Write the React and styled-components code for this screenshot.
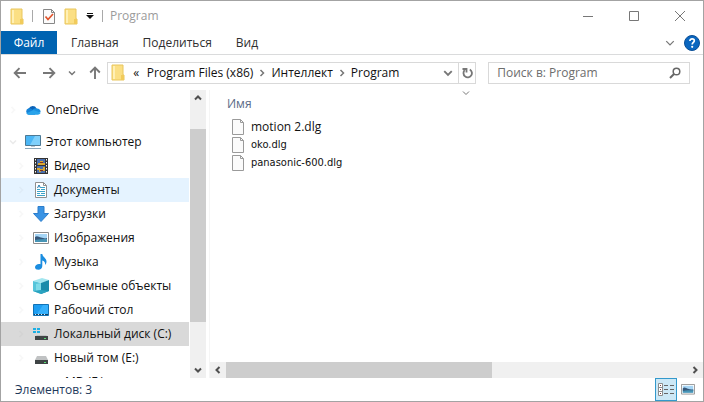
import { useState } from "react";
import styled, { createGlobalStyle, css } from "styled-components";

const GlobalStyle = createGlobalStyle`
  * {
    box-sizing: border-box;
  }

  body {
    margin: 0;
    background: #ffffff;
    color: #111111;
    font-family: "Open Sans", "Noto Sans", sans-serif;
    font-size: 12px;
    line-height: 16px;
  }

  button,
  input {
    font: inherit;
    color: inherit;
  }

  svg {
    display: block;
    flex: none;
  }
`;

const plainButton = css`
  display: flex;
  align-items: center;
  justify-content: center;
  flex: none;
  padding: 0;
  border: 0;
  background: transparent;
`;

const Window = styled.div`
  display: flex;
  flex-direction: column;
  height: 100vh;
  border: 1px solid #a3a3a3;
  background: #ffffff;
`;

/* Title bar */

const TitleBar = styled.header`
  display: flex;
  align-items: center;
  flex: none;
  height: 30px;
  padding-left: 8px;
`;

const QuickAccess = styled.div`
  display: flex;
  align-items: center;
  gap: 4px;
`;

const ToolButton = styled.button`
  ${plainButton}
  width: ${({ $width }) => $width}px;
  height: 20px;
`;

const Separator = styled.span`
  width: 1px;
  height: 12px;
  margin: 0 ${({ $gap }) => $gap}px;
  background: #a9a9a9;
`;

const Title = styled.h1`
  flex: 1;
  margin: 0;
  padding-left: 5px;
  color: #9b9b9b;
  font-size: 12px;
  font-weight: 400;
`;

const CaptionButton = styled.button`
  ${plainButton}
  width: 46px;
  height: 28px;
`;

/* Ribbon */

const Ribbon = styled.nav`
  display: flex;
  flex: none;
  height: 24px;
  border-bottom: 1px solid #dadbdc;
`;

const Tab = styled.button`
  ${plainButton}
  padding: 0 12px;
  color: #2f2f2f;

  ${({ $primary }) =>
    $primary &&
    css`
      width: 56px;
      margin-right: 2px;
      padding: 0;
      background: #0063b1;
      color: #ffffff;
    `}
`;

const RibbonTools = styled.div`
  display: flex;
  align-items: center;
  gap: 9px;
  margin-left: auto;
  padding-right: 3px;
`;

const RibbonButton = styled.button`
  ${plainButton}
`;

/* Address row */

const AddressRow = styled.div`
  display: flex;
  align-items: center;
  flex: none;
  height: 35px;
  padding: 0 13px 0 9px;
`;

const History = styled.div`
  display: flex;
  align-items: center;
  gap: 9px;
  width: 97px;
`;

const HistoryButton = styled.button`
  ${plainButton}
  width: ${({ $narrow }) => ($narrow ? 8 : 20)}px;
  height: 20px;
`;

const AddressBar = styled.div`
  display: flex;
  align-items: center;
  flex: 370 1 370px;
  height: 22px;
  border: 1px solid #d9d9d9;
  padding-left: 3px;
`;

const Crumbs = styled.div`
  display: flex;
  align-items: center;
  flex: 1;
  gap: 5px;
  padding-left: 6px;
`;

const Crumb = styled.button`
  ${plainButton}
`;

const OverflowCrumb = styled(Crumb)`
  width: 11px;
`;

const RefreshButton = styled.button`
  ${plainButton}
  width: 17px;
  height: 20px;
  border-left: 1px solid #d9d9d9;
`;

const SearchBox = styled.label`
  display: flex;
  align-items: center;
  flex: 202 1 202px;
  height: 22px;
  margin-left: 12px;
  padding: 0 8px;
  border: 1px solid #d9d9d9;
`;

const SearchInput = styled.input`
  flex: 1;
  min-width: 0;
  padding: 0;
  border: 0;
  outline: 0;
  background: transparent;

  &::placeholder {
    color: #6d6d6d;
    opacity: 1;
  }
`;

/* Body */

const Body = styled.div`
  display: flex;
  flex: 1;
  min-height: 0;
`;

const Sidebar = styled.aside`
  display: flex;
  flex: none;
  width: 209px;
  padding-right: 3px;
  border-right: 1px solid #f5f5f5;
`;

const Tree = styled.ul`
  flex: 1;
  min-width: 0;
  margin: 0;
  padding: 8px 1px 0 0;
  overflow: hidden;
  list-style: none;
`;

const TreeItem = styled.li`
  margin-top: ${({ $spaced }) => ($spaced ? 8 : 0)}px;
`;

const TreeButton = styled.button`
  ${plainButton}
  justify-content: flex-start;
  gap: 5px;
  width: 100%;
  height: 24px;
  padding-left: ${({ $level }) => 8 + $level * 8}px;
  white-space: nowrap;
  background: ${({ $state }) =>
    ({ hover: "#e5f3ff", selected: "#d9d9d9" })[$state] || "transparent"};

  &:hover {
    background: ${({ $state }) => ($state === "selected" ? "#d9d9d9" : "#e5f3ff")};
  }
`;

const Expander = styled.span`
  width: 11px;
  opacity: ${({ $open }) => ($open ? 0.15 : 0.05)};
`;

const ScrollTrack = styled.div`
  display: flex;
  flex: none;
  flex-direction: ${({ $horizontal }) => ($horizontal ? "row" : "column")};
  ${({ $horizontal }) => ($horizontal ? "height" : "width")}: 16px;
  background: #f0f0f0;
`;

const ScrollButton = styled.button`
  ${plainButton}
  width: 16px;
  height: 16px;
`;

const ScrollSpace = styled.div`
  flex: ${({ $share }) => $share} 1 0;
  background: ${({ $thumb }) => ($thumb ? "#cdcdcd" : "transparent")};
`;

const Content = styled.main`
  display: flex;
  flex: 1;
  flex-direction: column;
  min-width: 0;
`;

const SortMark = styled.div`
  display: flex;
  align-items: center;
  justify-content: center;
  height: 5px;
  padding-left: 18px;
`;

const FileArea = styled.div`
  flex: 1;
  min-height: 0;
  overflow: hidden;
`;

const FileTable = styled.table`
  width: 100%;
  border-collapse: collapse;

  th {
    height: 23px;
    padding: 0 0 5px 17px;
    color: #5a6a86;
    font-weight: 400;
    text-align: left;
  }

  td {
    height: 18px;
    padding: 0 0 0 22px;
  }
`;

const FileName = styled.div`
  display: flex;
  align-items: center;
  gap: 6px;

  ${({ $compact }) =>
    $compact &&
    css`
      font-family: "DejaVu Sans Condensed", "Open Sans", sans-serif;
      font-size: 11px;
    `}
`;

/* Status bar */

const StatusBar = styled.footer`
  display: flex;
  align-items: center;
  flex: none;
  height: 23px;
  padding: 0 4px 0 14px;
  color: #1e395b;
`;

const StatusText = styled.span`
  flex: 1;
`;

const ViewButton = styled.button`
  ${plainButton}
  width: 22px;
  height: 23px;
  border: 1px solid ${({ $active }) => ($active ? "#3399cc" : "transparent")};
  background: ${({ $active }) => ($active ? "#cce8f6" : "transparent")};
`;

/* Icons */

const Chevron = ({ dir = "down", size = 8, color = "#777777", weight = 1.5 }) => {
  const paths = {
    down: "M1 2.5 4 5.5 7 2.5",
    up: "M1 5.5 4 2.5 7 5.5",
    right: "M2.5 1 5.5 4 2.5 7",
    left: "M5.5 1 2.5 4 5.5 7",
  };
  return (
    <svg width={size} height={size} viewBox="0 0 8 8" fill="none" stroke={color} strokeWidth={weight}>
      <path d={paths[dir]} />
    </svg>
  );
};

const FolderIcon = () => (
  <svg width="14" height="17" viewBox="0 0 14 17">
    <path d="M1 1h11v10h1v5H1z" fill="#fbdf84" stroke="#e9c65c" />
    <path d="M2 2h2v13H2z" fill="#fff0b5" />
    <path d="M10 11h3v5h-3z" fill="#f1cb5b" />
  </svg>
);

const PropertiesIcon = () => (
  <svg width="14" height="17" viewBox="0 0 14 17" fill="none">
    <path d="M1.500 1.500h8l3 3v11h-11z" fill="#fbfbfb" stroke="#878787" />
    <path d="M9.500 1.500v3h3" stroke="#878787" />
    <path d="m3.500 8.500 2.500 3 5-5.500" stroke="#e0532b" strokeWidth="1.700" />
  </svg>
);

const CustomizeIcon = () => (
  <svg width="8" height="8" viewBox="0 0 8 8">
    <path d="M1 1h6v1H1zM0 3h8L4 7z" fill="#111111" />
  </svg>
);

const ArrowIcon = ({ turn = 0 }) => (
  <svg width="14" height="14" viewBox="0 0 14 14" fill="none" stroke="#777777" strokeWidth="1.900">
    <path d="M13 7H2M6.500 2.200 1.700 7l4.800 4.800" transform={`rotate(${turn} 7 7)`} />
  </svg>
);

const RefreshIcon = () => (
  <svg width="11" height="12" viewBox="0 0 11 12" fill="none" stroke="#777777" strokeWidth="1.800">
    <path d="M7.800 2.500A4.200 4.200 0 1 1 2.700 3.200" />
    <path d="M4.500 5.500V2H.5" />
  </svg>
);

const SearchIcon = () => (
  <svg width="12" height="12" viewBox="0 0 12 12" fill="none" stroke="#666666">
    <circle cx="7.500" cy="4.500" r="3.300" strokeWidth="1.500" />
    <path d="M5 7 1 11" strokeWidth="2" />
  </svg>
);

const HelpIcon = () => (
  <svg width="16" height="16" viewBox="0 0 16 16" fill="none">
    <circle cx="8" cy="8" r="7.500" fill="#0a66bf" stroke="#0b4f96" />
    <path d="M5.900 6c0-3 4.400-2.700 4.400-.2C10.300 7.500 8.200 7.400 8.200 9.500" stroke="#ffffff" strokeWidth="1.700" />
    <circle cx="8.200" cy="11.800" r="1.100" fill="#ffffff" />
  </svg>
);

const MinimizeIcon = () => (
  <svg width="10" height="10" viewBox="0 0 10 10">
    <path d="M0 5h10v1H0z" fill="#777777" />
  </svg>
);

const MaximizeIcon = () => (
  <svg width="10" height="10" viewBox="0 0 10 10" fill="none" stroke="#777777">
    <path d="M.5.5h9v9h-9z" />
  </svg>
);

const CloseIcon = () => (
  <svg width="10" height="10" viewBox="0 0 10 10" fill="none" stroke="#777777">
    <path d="m0 0 10 10M10 0 0 10" />
  </svg>
);

const OneDriveIcon = () => (
  <svg width="16" height="16" viewBox="0 0 17 16">
    <path d="M4 6.500a4.600 4.600 0 0 1 8.300-.2L11 9 4 8z" fill="#0a62b8" />
    <path d="M3.800 6.200C5.400 6 6.600 6.500 8 7.500L11 13H4A3.500 3.500 0 0 1 3.800 6.200z" fill="#1583d8" />
    <path d="M8 8.200c1-2 3-2.600 4.700-1.700 2.300 0 3.900 1.500 3.900 3.500L13 12z" fill="#1a8fe0" />
    <path d="M1.500 11.500 9 8l7.600 3c-.3 1.200-1.400 2-3 2H4c-1.200 0-2-.6-2.500-1.500z" fill="#29a3ea" />
  </svg>
);

const ComputerIcon = () => (
  <svg width="16" height="16" viewBox="0 0 16 16">
    <path d="M.5 1.500h15v10H.5z" fill="#4bb6f5" stroke="#4d7994" />
    <path d="M10 2h5v9H5z" fill="#7fd0fb" />
    <path d="M6 12h4v1H6z" fill="#b9c7d0" />
    <path d="M0 14h16v1H0z" fill="#8ba8bb" />
  </svg>
);

const VideoIcon = () => (
  <svg width="16" height="16" viewBox="0 0 16 16">
    <path d="M1 0h14v16H1z" fill="#333333" />
    <path d="M4 1h8v6H4zM4 8h8v7H4z" fill="#496fae" />
    <path d="M5 5h2V3h3v2h2v2H5zM4 10h3v1h3V9h2v4H8v1H6v-2H4z" fill="#d9a52f" />
    <path d="M7 4h3v1H7zM7 12h3v1H7z" fill="#7c2f23" />
    <path d="M2.500 1v15M13.500 1v15" stroke="#f5f5f5" strokeDasharray="1.500 1.500" />
  </svg>
);

const DocumentsIcon = () => (
  <svg width="16" height="16" viewBox="0 0 16 16" fill="none">
    <path d="M2.500.5h8l3 3v12h-11z" fill="#ffffff" stroke="#8f8f8f" />
    <path d="M10.500.5v3h3" stroke="#8f8f8f" />
    <path d="M4 7.500h3M8 5.500h4M8 7.500h4M4 9.500h8M4 11.500h3M8 11.500h4M4 13.500h8" stroke="#3ba3c9" />
    <path d="m4.500 6 1.500-3 1.500 3" stroke="#1e79ae" />
  </svg>
);

const DownloadsIcon = () => (
  <svg width="16" height="16" viewBox="0 0 16 16">
    <path d="M5 .5h6v7h4.500L8 15.500.500 7.500H5z" fill="#3993e4" stroke="#2b7dcc" />
  </svg>
);

const PictureIcon = ({ width = 16 }) => (
  <svg width={width} height={(width * 12) / 16} viewBox="0 0 16 12">
    <path d="M.5.5h15v11H.5z" fill="#ffffff" stroke="#8c8c8c" />
    <path d="M2 2h12v8H2z" fill="#a5d5f5" />
    <path d="M2 5c2-2 4 0 6 .5S12 7 14 6v2H2z" fill="#35577a" />
    <path d="M2 8c4-1 8-1 12-1v3H2z" fill="#4794b5" />
  </svg>
);

const MusicIcon = () => (
  <svg width="16" height="16" viewBox="0 0 16 16">
    <path
      d="M7.500 0h1.800c.2 3 4.200 4 4.200 7.500 0 1.400-.6 2.500-1.500 3.500.6-3-1-4-2.700-4.600V12c0 2.200-1.700 3.800-4 3.800C3.500 15.800 2 15 2 13.300c0-2.400 3-3.900 5.500-3z"
      fill="#1b8de0"
    />
  </svg>
);

const ObjectsIcon = () => (
  <svg width="16" height="16" viewBox="0 0 16 16">
    <path d="M0 3 9 0l7 2-7 3z" fill="#a2e6ef" />
    <path d="M0 3l8 2v11l-8-3z" fill="#56c5da" />
    <path d="M8 5l8-3v11l-8 3z" fill="#198ba9" />
    <path d="M3 6l5-1v7l-5 1z" fill="#7fdbe8" />
    <path d="M8 12l8 1-8 3-8-3z" fill="#2ba3c0" />
  </svg>
);

const DesktopIcon = () => (
  <svg width="16" height="12" viewBox="0 0 16 12">
    <path d="M.5.5h15v11H.5z" fill="#1c9df2" stroke="#1272b5" />
    <path d="M10 1h5v9H4z" fill="#36b0fb" />
    <path d="M1 10h14v1H1z" fill="#17415f" />
    <path d="M2 10.500h11" stroke="#d5efff" strokeDasharray="1 2" />
  </svg>
);

const DriveIcon = ({ system }) => (
  <svg width="16" height="16" viewBox="0 0 16 16">
    {system && <path d="M0 2h3v2H0zM4 2h3v2H4zM0 5h3v2H0zM4 5h3v2H4z" fill="#1cafe4" />}
    <path d={system ? "M4 9h9l2 2H2z" : "M4 6h9l2 4H2z"} fill="#c0c2c3" />
    <path d={system ? "M2 10h13v4H2z" : "M2 10h13v4H2z"} fill="#3f4445" />
    <path d="M11 12h2v1h-2z" fill="#57df75" />
  </svg>
);

const FileIcon = () => (
  <svg width="13" height="17" viewBox="0 0 13 17" fill="none" stroke="#9a9a9a">
    <path d="M.5.5h8l3 3v12h-11z" fill="#fbfbfb" />
    <path d="M8.500.5v3h3" />
  </svg>
);

const DetailsIcon = () => (
  <svg width="16" height="14" viewBox="0 0 16 14" fill="none">
    <path d="M.5.5h4v12h-4zM.5 4.500h4M.5 8.500h4" fill="#ffffff" stroke="#8d8d8d" />
    <path d="M2 2h1v1H2zM2 6h1v1H2zM2 10h1v1H2z" fill="#7b4545" />
    <path d="M6 2.500h4M12 2.500h4M6 6.500h4M12 6.500h4M6 10.500h4M12 10.500h4" stroke="#666666" />
  </svg>
);

const places = [
  { name: "OneDrive", icon: <OneDriveIcon />, level: 0 },
  { name: "Этот компьютер", icon: <ComputerIcon />, level: 0, spaced: true, open: true },
  { name: "Видео", icon: <VideoIcon />, level: 1 },
  { name: "Документы", icon: <DocumentsIcon />, level: 1, hover: true },
  { name: "Загрузки", icon: <DownloadsIcon />, level: 1 },
  { name: "Изображения", icon: <PictureIcon />, level: 1 },
  { name: "Музыка", icon: <MusicIcon />, level: 1 },
  { name: "Объемные объекты", icon: <ObjectsIcon />, level: 1 },
  { name: "Рабочий стол", icon: <DesktopIcon />, level: 1 },
  { name: "Локальный диск (C:)", icon: <DriveIcon system />, level: 1 },
  { name: "Новый том (E:)", icon: <DriveIcon />, level: 1 },
  { name: "MD (F:)", level: 5 },
];

const files = [
  { name: "motion 2.dlg" },
  { name: "oko.dlg", compact: true },
  { name: "panasonic-600.dlg", compact: true },
];

const App = () => {
  const [selected, setSelected] = useState("Локальный диск (C:)");
  const [view, setView] = useState("details");

  const stateOf = (place) => {
    if (place.name === selected) return "selected";
    return place.hover ? "hover" : undefined;
  };

  return (
    <>
      <GlobalStyle />
      <Window>
        <TitleBar>
          <QuickAccess>
            <ToolButton $width={16} aria-label="Папка">
              <FolderIcon />
            </ToolButton>
            <Separator $gap={3} />
            <ToolButton $width={18} aria-label="Свойства">
              <PropertiesIcon />
            </ToolButton>
            <ToolButton $width={18} aria-label="Новая папка">
              <FolderIcon />
            </ToolButton>
            <ToolButton $width={12} aria-label="Настройка панели">
              <CustomizeIcon />
            </ToolButton>
            <Separator $gap={2} />
          </QuickAccess>
          <Title>Program</Title>
          <CaptionButton aria-label="Свернуть">
            <MinimizeIcon />
          </CaptionButton>
          <CaptionButton aria-label="Развернуть">
            <MaximizeIcon />
          </CaptionButton>
          <CaptionButton aria-label="Закрыть">
            <CloseIcon />
          </CaptionButton>
        </TitleBar>

        <Ribbon>
          <Tab $primary>Файл</Tab>
          <Tab>Главная</Tab>
          <Tab>Поделиться</Tab>
          <Tab>Вид</Tab>
          <RibbonTools>
            <RibbonButton aria-label="Развернуть ленту">
              <Chevron size={10} weight={1} />
            </RibbonButton>
            <RibbonButton aria-label="Справка">
              <HelpIcon />
            </RibbonButton>
          </RibbonTools>
        </Ribbon>

        <AddressRow>
          <History>
            <HistoryButton aria-label="Назад">
              <ArrowIcon />
            </HistoryButton>
            <HistoryButton aria-label="Вперед">
              <ArrowIcon turn={180} />
            </HistoryButton>
            <HistoryButton $narrow aria-label="Последние расположения">
              <Chevron />
            </HistoryButton>
            <HistoryButton aria-label="Вверх">
              <ArrowIcon turn={90} />
            </HistoryButton>
          </History>
          <AddressBar>
            <FolderIcon />
            <Crumbs>
              <OverflowCrumb>«</OverflowCrumb>
              <Crumb>Program Files (x86)</Crumb>
              <Chevron dir="right" />
              <Crumb>Интеллект</Crumb>
              <Chevron dir="right" />
              <Crumb>Program</Crumb>
            </Crumbs>
            <HistoryButton aria-label="Предыдущие расположения">
              <Chevron size={10} />
            </HistoryButton>
            <RefreshButton aria-label="Обновить">
              <RefreshIcon />
            </RefreshButton>
          </AddressBar>
          <SearchBox>
            <SearchInput type="text" aria-label="Поиск" placeholder="Поиск в: Program" />
            <SearchIcon />
          </SearchBox>
        </AddressRow>

        <Body>
          <Sidebar>
            <Tree>
              {places.map((place) => (
                <TreeItem key={place.name} $spaced={place.spaced}>
                  <TreeButton
                    $level={place.level}
                    $state={stateOf(place)}
                    onClick={() => setSelected(place.name)}
                  >
                    <Expander $open={place.open}>
                      <Chevron dir={place.open ? "down" : "right"} />
                    </Expander>
                    {place.icon}
                    {place.name}
                  </TreeButton>
                </TreeItem>
              ))}
            </Tree>
            <ScrollTrack>
              <ScrollButton aria-label="Вверх">
                <Chevron dir="up" color="#505050" weight={2} />
              </ScrollButton>
              <ScrollSpace $share={23} />
              <ScrollSpace $share={193} $thumb />
              <ScrollSpace $share={40} />
              <ScrollButton aria-label="Вниз">
                <Chevron color="#505050" weight={2} />
              </ScrollButton>
            </ScrollTrack>
          </Sidebar>

          <Content>
            <SortMark>
              <Chevron weight={1} />
            </SortMark>
            <FileArea>
              <FileTable>
                <thead>
                  <tr>
                    <th scope="col">Имя</th>
                  </tr>
                </thead>
                <tbody>
                  {files.map((file) => (
                    <tr key={file.name}>
                      <td>
                        <FileName $compact={file.compact}>
                          <FileIcon />
                          {file.name}
                        </FileName>
                      </td>
                    </tr>
                  ))}
                </tbody>
              </FileTable>
            </FileArea>
            <ScrollTrack $horizontal>
              <ScrollButton aria-label="Влево">
                <Chevron dir="left" color="#505050" weight={2} />
              </ScrollButton>
              <ScrollSpace $share={265} $thumb />
              <ScrollSpace $share={195} />
              <ScrollButton aria-label="Вправо">
                <Chevron dir="right" color="#505050" weight={2} />
              </ScrollButton>
            </ScrollTrack>
          </Content>
        </Body>

        <StatusBar>
          <StatusText>Элементов: 3</StatusText>
          <ViewButton
            $active={view === "details"}
            aria-label="Таблица"
            onClick={() => setView("details")}
          >
            <DetailsIcon />
          </ViewButton>
          <ViewButton
            $active={view === "icons"}
            aria-label="Крупные значки"
            onClick={() => setView("icons")}
          >
            <PictureIcon width={14} />
          </ViewButton>
        </StatusBar>
      </Window>
    </>
  );
};

export default App;
